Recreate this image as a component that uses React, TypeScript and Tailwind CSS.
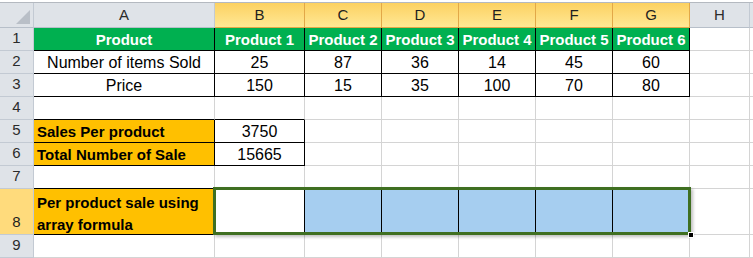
const cols = ["A", "B", "C", "D", "E", "F", "G", "H"];
const widths = ["w-[181px]", "w-[90px]", "w-[77px]", "w-[77px]", "w-[77px]", "w-[77px]", "w-[77px]", "w-[60px]"];

type Cell = { text?: string; bg?: string; bold?: boolean; white?: boolean; left?: boolean };

const rows: { h: string; cells: Cell[] }[] = [
  {
    h: "h-[23px]",
    cells: [
      { text: "Product", bg: "bg-[#00b050]", bold: true, white: true },
      { text: "Product 1", bg: "bg-[#00b050]", bold: true, white: true },
      { text: "Product 2", bg: "bg-[#00b050]", bold: true, white: true },
      { text: "Product 3", bg: "bg-[#00b050]", bold: true, white: true },
      { text: "Product 4", bg: "bg-[#00b050]", bold: true, white: true },
      { text: "Product 5", bg: "bg-[#00b050]", bold: true, white: true },
      { text: "Product 6", bg: "bg-[#00b050]", bold: true, white: true },
      {},
    ],
  },
  {
    h: "h-[23px]",
    cells: [{ text: "Number of items Sold" }, { text: "25" }, { text: "87" }, { text: "36" }, { text: "14" }, { text: "45" }, { text: "60" }, {}],
  },
  {
    h: "h-[23px]",
    cells: [{ text: "Price" }, { text: "150" }, { text: "15" }, { text: "35" }, { text: "100" }, { text: "70" }, { text: "80" }, {}],
  },
  { h: "h-[23px]", cells: [{}, {}, {}, {}, {}, {}, {}, {}] },
  {
    h: "h-[23px]",
    cells: [{ text: "Sales Per product", bg: "bg-[#ffc000]", bold: true, left: true }, { text: "3750" }, {}, {}, {}, {}, {}, {}],
  },
  {
    h: "h-[23px]",
    cells: [{ text: "Total Number of Sale", bg: "bg-[#ffc000]", bold: true, left: true }, { text: "15665" }, {}, {}, {}, {}, {}, {}],
  },
  { h: "h-[23px]", cells: [{}, {}, {}, {}, {}, {}, {}, {}] },
  {
    h: "h-[46px]",
    cells: [
      { text: "Per product sale using array formula", bg: "bg-[#ffc000]", bold: true, left: true },
      {},
      { bg: "bg-[#a6cef0]" },
      { bg: "bg-[#a6cef0]" },
      { bg: "bg-[#a6cef0]" },
      { bg: "bg-[#a6cef0]" },
      { bg: "bg-[#a6cef0]" },
      {},
    ],
  },
  { h: "h-[23px]", cells: [{}, {}, {}, {}, {}, {}, {}, {}] },
];

// cells with thin black borders (row index 0-based, col index 0-based from A)
function boxed(r: number, c: number) {
  if (r >= 0 && r <= 2 && c <= 6) return true;
  if ((r === 4 || r === 5) && c <= 1) return true;
  if (r === 7 && c <= 6) return true;
  return false;
}

function ColHeader({ letter, i }: { letter: string; i: number }) {
  const selected = i >= 1 && i <= 6;
  return (
    <div
      className={`${widths[i]} h-[25px] shrink-0 flex items-center justify-center border-r border-b text-[15px] ${
        selected
          ? "bg-linear-to-b from-[#fcd160] to-[#ffe894] border-r-[#e2a848] border-b-[#e2a848] text-[#1f1f1f]"
          : "bg-[#dfe3e8] border-r-[#c3cad3] border-b-[#b7bfc9] text-[#2b2b2b]"
      }`}
    >
      {letter}
    </div>
  );
}

export default function App() {
  return (
    <div className="w-[753px] h-[258px] overflow-hidden bg-white font-['Liberation_Sans',Arial,sans-serif] relative">
      <div className="h-[3px] border-b border-[#b4b9c0] bg-white" />
      <div className="flex">
        <div className="w-[34px] h-[25px] shrink-0 bg-[#dfe3e8] border-r border-b border-r-[#c3cad3] border-b-[#b7bfc9] flex items-end justify-end p-[3px]">
          <svg width="14" height="14" viewBox="0 0 14 14">
            <polygon points="14,0 14,14 0,14" fill="#b9bfc7" />
          </svg>
        </div>
        {cols.map((c, i) => (
          <ColHeader key={c} letter={c} i={i} />
        ))}
        <div className="flex-1 h-[25px] bg-[#dfe3e8] border-b border-[#b7bfc9]" />
      </div>
      {rows.map((row, r) => (
        <div key={r} className="flex">
          <div
            className={`w-[34px] ${row.h} shrink-0 flex justify-center border-r border-b border-r-[#c3cad3] border-b-[#c3cad3] text-[15px] pb-[1px] ${
              r === 7 ? "bg-[#ffdb7c] items-end text-[#1f1f1f]" : "bg-[#dfe3e8] items-center text-[#2b2b2b]"
            }`}
          >
            {r + 1}
          </div>
          {row.cells.map((cell, c) => {
            const rightBlack = boxed(r, c) || boxed(r, c + 1);
            const bottomBlack = boxed(r, c) || boxed(r + 1, c);
            return (
              <div
                key={c}
                className={`${widths[c]} ${row.h} shrink-0 flex border-r border-b leading-[22px] ${
                  cell.bold ? "font-bold text-[15px]" : "text-[16px]"
                } ${cell.bg ?? "bg-white"} ${rightBlack ? "border-r-black" : "border-r-[#d4d4d4]"} ${
                  bottomBlack ? "border-b-black" : "border-b-[#d4d4d4]"
                } ${
                  r === 7
                    ? "justify-start items-start pl-[3px] pt-[3px]"
                    : cell.left
                      ? "justify-start pl-[3px] items-center pt-[1px]"
                      : "justify-center items-center pt-[1px]"
                } ${cell.white ? "text-white" : "text-black"}`}
              >
                {cell.text && <span className={r === 7 ? "w-[176px]" : ""}>{cell.text}</span>}
              </div>
            );
          })}
          <div className={`flex-1 ${row.h} border-b border-[#d4d4d4] bg-white`} />
        </div>
      ))}
      {/* selection of B8:G8 */}
      <div className="absolute left-[213px] top-[187px] w-[478px] h-[48px] border-[3px] border-[#3f6f21] shadow-[2px_2px_3px_rgba(0,0,0,0.25)] pointer-events-none" />
      <div className="absolute left-[688px] top-[232px] w-[6px] h-[6px] bg-black border border-white pointer-events-none" />
    </div>
  );
}
